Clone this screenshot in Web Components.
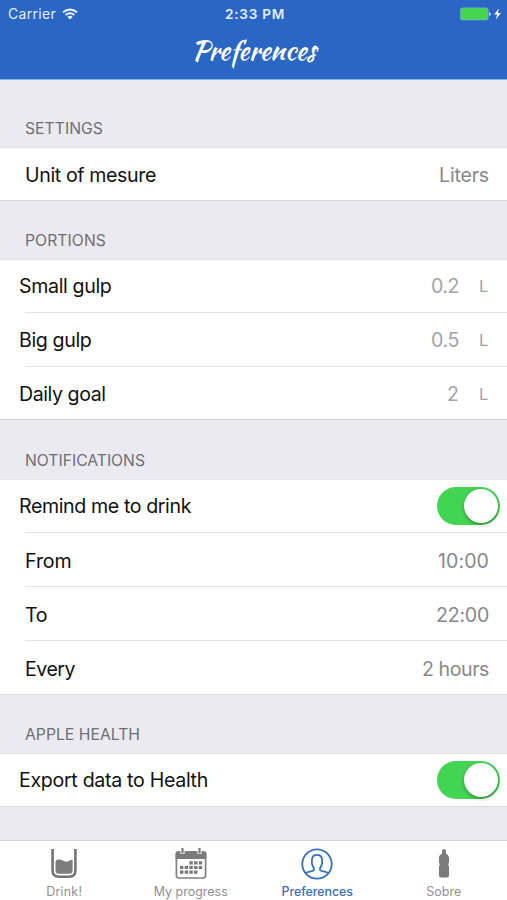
<!DOCTYPE html>
<html lang="en">
<head>
<meta charset="utf-8">
<title>Preferences</title>
<style>
html,body{margin:0;height:100%;background:#ebeaf0;font-family:Inter,"Liberation Sans",sans-serif}
</style>
</head>
<body>
<prefs-app></prefs-app>
<script>
const define = (name, html, setup) => {
  const template = document.createElement('template');
  template.innerHTML = html;
  customElements.define(name, class extends HTMLElement {
    connectedCallback() {
      if (this.shadowRoot) return;
      this.attachShadow({mode: 'open'}).append(template.content.cloneNode(true));
      if (setup) setup.call(this, this.shadowRoot);
    }
  });
};

// Text tracked so that its line takes the given width.
define('fit-text', `<style>:host{display:inline-block;white-space:nowrap;flex:none}span{display:inline-block}</style><span></span>`, function (root) {
  const span = root.querySelector('span');
  span.textContent = this.getAttribute('text');
  const target = Number(this.getAttribute('width'));
  const gap = (target - span.getBoundingClientRect().width) / span.textContent.length;
  span.style.letterSpacing = gap.toFixed(3) + 'px';
});

define('status-bar', `<style>
:host{display:grid;grid-template-columns:1fr auto 1fr;align-items:center;height:27px;color:#e4eeff;font-size:14px;padding:0 5px 0 8px}
.l,.r{display:flex;align-items:center}.l{gap:6px}.r{justify-content:flex-end}
.t{font-weight:600;font-size:13.6px;padding-top:1px}svg{display:block}
</style>
<div class="l"><fit-text text="Carrier" width="48"></fit-text>
<svg width="16" height="12" viewBox="0 0 16 12" fill="none" stroke="#eef4ff" stroke-width="1.9"><path d="M1 4.3Q8-1.5 15 4.3M3.6 7Q8 3.6 12.4 7"/><path d="M5.4 8.8Q8 6.9 10.6 8.8L8 11.5Z" fill="#eef4ff" stroke="none"/></svg></div>
<div class="t"><fit-text text="2:33 PM" width="60"></fit-text></div>
<div class="r"><svg width="43" height="14" viewBox="0 0 43 14"><rect x="1.5" y=".9" width="27.6" height="12" rx="2" fill="#45d650" stroke="#79adc7" stroke-width=".8"/><path d="M30.1 5v4q1.8-.5 1.8-2t-1.8-2" fill="#b9d6fa"/><path d="M39.9 1.5L35.2 7.5h3l-1.3 4.9 5-6.3h-3.1z" fill="#fff"/></svg></div>`);

define('nav-header', `<style>
:host{display:block;height:79px;background:#2a66c4;border-bottom:1px solid #8eb3e8;box-sizing:content-box}
.title{height:48px;display:flex;justify-content:center;align-items:center;color:#fff;font:400 27px/48px "Kaushan Script",cursive}
</style><status-bar></status-bar><div class="title"><fit-text text="Preferences" width="124"></fit-text></div>`);

define('settings-group', `<style>
:host{display:block}
h2{margin:0;box-sizing:border-box;height:var(--head,60px);padding:0 0 8px 25px;display:flex;align-items:flex-end;font-size:15.7px;line-height:20px;font-weight:400;color:#6f6e74;border-bottom:1px solid #e2e1e6}
.rows{background:#fff;border-bottom:1px solid #d7d6db}
</style><h2><fit-text></fit-text></h2><div class="rows"><slot></slot></div>`, function (root) {
  const old = root.querySelector('fit-text');
  const text = document.createElement('fit-text');
  text.setAttribute('text', this.getAttribute('label'));
  text.setAttribute('width', this.getAttribute('width'));
  old.replaceWith(text);
});

define('settings-row', `<style>
:host{display:flex;align-items:center;box-sizing:border-box;height:var(--h,54px);padding:var(--top,2px) 18px var(--bottom,0) 25px;font-size:19.6px;line-height:24px;color:#111;background:linear-gradient(#e5e5e9,#e5e5e9) 25px 100%/100% 1px no-repeat}
:host([flush]){padding-left:19px}
:host([last]){background:none}
:host([toggle]){padding-right:7px}
.value{margin-left:auto;color:#88888c;display:flex;align-items:center}
</style><slot></slot><div class="value"><slot name="value"></slot></div>`);

define('unit-mark', `<style>:host{display:block;width:10px;margin-left:20px;font-size:16.5px;color:#a3a3a7}</style><slot></slot>`);
define('portion-value', `<style>:host{display:block;color:#a3a3a7}</style><slot></slot>`);

define('toggle-switch', `<style>
:host{display:flex;justify-content:flex-end;box-sizing:border-box;width:63px;height:38px;padding:2px;border-radius:19px;background:#42d551}
i{width:34px;height:34px;border-radius:50%;background:#fff;box-shadow:0 2px 4px #0003,0 1px 2px #0003}
</style><i></i>`);

define('tab-item', `<style>
:host{display:flex;flex-direction:column;align-items:center;color:#909090;font-size:12.4px;line-height:16px}
:host([active]){color:#3b70bf;font-weight:500}
.icon{height:32px;margin:7px 0 4px}
</style><div class="icon"><slot></slot></div><slot name="label"></slot>`);

define('tab-bar', `<style>
:host{box-sizing:border-box;height:60px;border-top:1px solid #d6d6da;background:#fff;display:grid;grid-template-columns:repeat(4,126.5px);justify-content:center;padding-left:1px}
svg{display:block}
</style>
<tab-item><svg width="32" height="32" viewBox="0 0 32 32"><path d="M4.6 1V22.5Q4.6 28.7 11 28.7H21Q27.4 28.7 27.4 22.5V1" fill="none" stroke="#747474" stroke-width="2.6"/><path d="M7.5 13.2C11.5 9.2 14.8 13.9 18.5 13.8 21 13.6 22 11.6 24.6 11.8V22.7Q24.6 25.7 21.3 25.7H10.9Q7.5 25.7 7.5 22.5Z" fill="#7d7d7d"/></svg><fit-text slot="label" text="Drink!" width="36"></fit-text></tab-item>
<tab-item><svg width="32" height="32" viewBox="0 0 32 32"><rect x="1.4" y="4" width="29.2" height="26" rx="2.4" fill="#fff" stroke="#808080" stroke-width="1.7"/><path d="M.6 11V5.5Q.6 3.2 3 3.2H29Q31.4 3.2 31.4 5.5V11Z" fill="#7b7b7b"/><path d="M7.5 0V6M24.5 0V6" stroke="#fff" stroke-width="4"/><path d="M7.5 0V5.5M24.5 0V5.5" stroke="#7b7b7b" stroke-width="2.2"/><path d="M14.4 14.8H28M5 19.5H28M5 24.2H23.4" stroke="#777" stroke-width="3.2" stroke-dasharray="3.4 1.28"/></svg><fit-text slot="label" text="My progress" width="74"></fit-text></tab-item>
<tab-item active><svg width="32" height="32" viewBox="0 0 32 32" fill="none" stroke="#386fbf" stroke-width="1.8"><circle cx="16" cy="16" r="14.7"/><path d="M4.5 25.2C7 23.2 11 24.1 12.8 22.1 13.9 20.8 12.2 19.3 11.4 17.1 10.8 15.5 10.8 13 11 11.3 11.3 8.4 13.2 6.9 16 6.9S20.7 8.4 21 11.3C21.2 13 21.2 15.5 20.6 17.1 19.8 19.3 18.1 20.8 19.2 22.1 21 24.1 25 23.2 27.5 25.2"/></svg><fit-text slot="label" text="Preferences" width="71.5"></fit-text></tab-item>
<tab-item><svg width="32" height="32" viewBox="0 0 32 32"><path d="M14.1 2.2Q14.1 1.3 15 1.3H17Q17.9 1.3 17.9 2.2V5C18.2 6.3 21 7.1 21 9.7V14.5Q19.3 16.2 21 18.5V27.5Q21 29.4 19 29.4H13Q11 29.4 11 27.5V18.5Q12.7 16.2 11 14.5V9.7C11 7.1 13.8 6.3 14.1 5Z" fill="#7b7b7b"/></svg><fit-text slot="label" text="Sobre" width="35"></fit-text></tab-item>`);

define('prefs-app', `<style>
:host{display:flex;flex-direction:column;height:900px;width:507px;overflow:hidden;background:#ebeaf0}
main{flex:1;min-height:0}
</style>
<nav-header></nav-header>
<main>
<settings-group label="SETTINGS" width="78" style="--head:68px">
<settings-row last style="--h:52px"><fit-text text="Unit of mesure" width="131"></fit-text><fit-text slot="value" text="Liters" width="50"></fit-text></settings-row></settings-group>
<settings-group label="PORTIONS" width="81" style="--head:59px">
<settings-row flush style="--h:53px;--top:0px;--bottom:1px"><fit-text text="Small gulp" width="92.5"></fit-text><portion-value slot="value"><fit-text text="0.2" width="28"></fit-text></portion-value><unit-mark slot="value">L</unit-mark></settings-row>
<settings-row flush style="--top:0px"><fit-text text="Big gulp" width="72.5"></fit-text><portion-value slot="value"><fit-text text="0.5" width="28"></fit-text></portion-value><unit-mark slot="value">L</unit-mark></settings-row>
<settings-row flush last style="--h:52px"><fit-text text="Daily goal" width="86.5"></fit-text><portion-value slot="value">2</portion-value><unit-mark slot="value">L</unit-mark></settings-row></settings-group>
<settings-group label="NOTIFICATIONS" width="120">
<settings-row flush toggle style="--h:53px;--top:0px;--bottom:2px"><fit-text text="Remind me to drink" width="172"></fit-text><toggle-switch slot="value"></toggle-switch></settings-row>
<settings-row><fit-text text="From" width="46.5"></fit-text><fit-text slot="value" text="10:00" width="51"></fit-text></settings-row>
<settings-row><fit-text text="To" width="22"></fit-text><fit-text slot="value" text="22:00" width="53"></fit-text></settings-row>
<settings-row last style="--h:53px"><fit-text text="Every" width="50"></fit-text><fit-text slot="value" text="2 hours" width="67"></fit-text></settings-row></settings-group>
<settings-group label="APPLE HEALTH" width="115" style="--head:59px">
<settings-row flush toggle last style="--h:52px;--top:0px;--bottom:1px"><fit-text text="Export data to Health" width="189"></fit-text><toggle-switch slot="value"></toggle-switch></settings-row></settings-group>
</main>
<tab-bar></tab-bar>`);
</script>
</body>
</html>
